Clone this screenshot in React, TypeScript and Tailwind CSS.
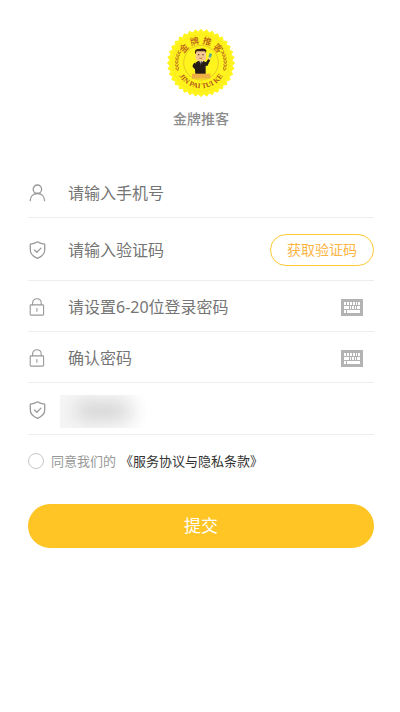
import { useState } from 'react'

const badgeEdge = Array.from({ length: 72 }, (_, i) => {
  const r = i % 2 === 0 ? 101 : 93
  const a = (i * Math.PI) / 36
  return `${(123 + r * Math.sin(a)).toFixed(1)},${(125 - r * Math.cos(a)).toFixed(1)}`
}).join(' ')

const leaves = [-20, -12, -4, 4, 12, 20]

function Badge() {
  return (
    <svg viewBox="21 23 204 204" className="size-[68px]" role="img" aria-label="金牌推客">
      <defs>
        <path id="arc-top" d="M 65 125 A 58 58 0 0 1 181 125" />
        <path id="arc-bottom" d="M 47 125 A 76 76 0 0 0 199 125" />
      </defs>
      <polygon points={badgeEdge} fill="#fff41c" stroke="#fff41c" strokeWidth="3" strokeLinejoin="round" />
      <circle cx="123" cy="125" r="85" fill="none" stroke="#f8e21c" strokeWidth="2" />
      <circle cx="123" cy="124" r="52" fill="none" stroke="#d9b32a" strokeWidth="2" />

      {/* wheat on both sides */}
      {leaves.map(a => (
        <g key={a} fill="#c98a20">
          <ellipse cx="48" cy="118" rx="2" ry="6" transform={`rotate(${a} 123 125) rotate(-24 48 118)`} />
          <ellipse cx="53" cy="118" rx="2" ry="6" transform={`rotate(${a} 123 125) rotate(32 53 118)`} />
          <ellipse cx="198" cy="118" rx="2" ry="6" transform={`rotate(${-a} 123 125) rotate(24 198 118)`} />
          <ellipse cx="193" cy="118" rx="2" ry="6" transform={`rotate(${-a} 123 125) rotate(-32 193 118)`} />
        </g>
      ))}

      <text fill="#bb5f1a" className="font-['Noto_Sans_CJK_SC',sans-serif] text-[27px] font-medium">
        <textPath href="#arc-top" startOffset="50%" textAnchor="middle">金 牌 推 客</textPath>
      </text>
      <text fill="#b4581a" className="font-['Liberation_Serif',serif] text-[22px] font-bold">
        <textPath href="#arc-bottom" startOffset="50%" textAnchor="middle">JIN PAI TUI KE</textPath>
      </text>

      {/* salesman behind the desk */}
      <path d="M106 158 L104 132 Q106 121 116 119 L130 119 L138 123 L145 112 L151 116 L142 134 L137 133 L137 158 Z" fill="#251c18" />
      <path d="M106 123 Q97 128 98 137 L108 147 L111 140 L105 134 Z" fill="#251c18" />
      <path d="M118 118 L123 132 L129 118 Z" fill="#fff" />
      <path d="M122 120 h3 l1 9 l-3 4 l-2 -4 Z" fill="#251c18" />
      <rect x="107" y="88" width="31" height="30" rx="7" fill="#f6c790" />
      <path d="M105 96 Q103 82 116 83 Q131 79 139 86 L138 96 L135 90 L110 90 L107 98 Z" fill="#3b2417" />
      <circle cx="116" cy="100" r="2" fill="#251c18" />
      <circle cx="129" cy="100" r="2" fill="#251c18" />
      <path d="M118 110 q5 3 9 0" fill="none" stroke="#9b4a20" strokeWidth="2" />
      <circle cx="148" cy="111" r="4" fill="#f6c790" />
      <rect x="147" y="96" width="8" height="12" rx="1" fill="#5aa596" transform="rotate(15 151 102)" />
      <rect x="96" y="157" width="55" height="15" fill="#eeb043" />
    </svg>
  )
}

function UserIcon() {
  return (
    <svg viewBox="0 0 18 18" className="size-[18px]" fill="none" stroke="#999" strokeWidth="1.3" strokeLinecap="round" aria-hidden="true">
      <circle cx="9.4" cy="5.2" r="4.2" />
      <path d="M2.2 16.6 C2.4 12.2 5.4 9.5 9.4 9.5 C13.4 9.5 16.4 12.2 16.6 16.6" />
    </svg>
  )
}

function ShieldIcon() {
  return (
    <svg viewBox="0 0 18 18" className="size-[18px]" fill="none" stroke="#999" strokeWidth="1.3" strokeLinecap="round" strokeLinejoin="round" aria-hidden="true">
      <path d="M9.5 0.8 C7.4 2.3 4.8 3 2.3 3.1 V9 C2.3 12.9 5.5 15.7 9.5 17.3 C13.5 15.7 16.7 12.9 16.7 9 V3.1 C14.2 3 11.6 2.3 9.5 0.8 Z" />
      <path d="M6.3 8.9 L8.8 11.3 L13 7.1" />
    </svg>
  )
}

function LockIcon() {
  return (
    <svg viewBox="0 0 18 18" className="size-[18px]" fill="none" stroke="#999" strokeWidth="1.1" strokeLinecap="round" aria-hidden="true">
      <rect x="2.2" y="6.9" width="13.4" height="10.2" rx="0.8" />
      <path d="M4.6 6.8 V5 C4.6 2.5 6.4 0.8 8.9 0.8 C11.4 0.8 13.2 2.5 13.2 5 V6.8" />
      <path d="M8.9 10.6 V13.2" />
    </svg>
  )
}

function KeyboardIcon() {
  return (
    <svg viewBox="0 0 22 17" className="h-[17px] w-[22px]" aria-hidden="true">
      <rect width="22" height="17" rx="0.6" fill="#b3b3b3" />
      <g fill="#fff">
        <path d="M3 3h2v3h-2zM6 3h2v3h-2zM9 3h2v3h-2zM12 3h2v3h-2zM15 3h1v3h-1zM17 3h2v3h-2z" />
        <path d="M3 7h5v3h-5zM9 7h1v3h-1zM11 7h2v3h-2zM14 7h1v3h-1zM16 7h3v3h-3z" />
        <path d="M3 11h2v3h-2zM6 11h13v3h-13z" />
      </g>
    </svg>
  )
}

const row = 'flex items-center border-b border-[#eeeeee] pt-0.5'
const field = 'ml-[22px] h-8 min-w-0 flex-1 bg-transparent text-base text-[#333333] placeholder-[#757575] outline-none'

function PasswordRow({ id, placeholder }: { id: string; placeholder: string }) {
  const [visible, setVisible] = useState(false)

  return (
    <div className={`${row} h-[51px]`}>
      <label htmlFor={id} aria-label={placeholder}><LockIcon /></label>
      <input id={id} type={visible ? 'text' : 'password'} placeholder={placeholder} className={field} />
      <button type="button" aria-label="显示密码" onClick={() => setVisible(!visible)} className="mr-[11px]">
        <KeyboardIcon />
      </button>
    </div>
  )
}

export default function App() {
  const [agreed, setAgreed] = useState(false)

  return (
    <main className="min-h-screen bg-white pt-[29px] pr-[26px] pb-10 pl-7 font-['Noto_Sans','Noto_Sans_CJK_SC',sans-serif]">
      <header className="flex flex-col items-center">
        <Badge />
        <h1 className="mt-3 text-sm font-medium text-[#8c8c8c]">金牌推客</h1>
      </header>

      <form className="mt-[38px]" onSubmit={e => e.preventDefault()}>
        <div className={`${row} h-[51px]`}>
          <label htmlFor="phone" aria-label="手机号"><UserIcon /></label>
          <input id="phone" type="tel" placeholder="请输入手机号" className={field} />
        </div>
        <div className={`${row} h-[63px]`}>
          <label htmlFor="code" aria-label="验证码"><ShieldIcon /></label>
          <input id="code" type="text" placeholder="请输入验证码" className={field} />
          <button type="button" className="h-8 w-[104px] shrink-0 rounded-full border border-[#fdc938] text-sm text-[#fcb544]">
            获取验证码
          </button>
        </div>
        <PasswordRow id="password" placeholder="请设置6-20位登录密码" />
        <PasswordRow id="confirm" placeholder="确认密码" />
        <div className={`${row} h-[52px]`}>
          <ShieldIcon />
          <div className="mt-1 ml-[14px] h-[33px] w-[86px] overflow-hidden bg-gradient-to-r from-[#f6f6f6] to-white">
            <div className="mx-4 mt-2 h-4 bg-[#c8c8c8] blur-[10px]" />
          </div>
        </div>

        <div className="mt-4 flex items-center text-[13px] leading-5">
          <input
            id="agree"
            type="checkbox"
            checked={agreed}
            onChange={e => setAgreed(e.target.checked)}
            className="mr-[7px] size-4 appearance-none rounded-full border border-[#c8c8c8] checked:bg-[#ffc524]"
          />
          <label htmlFor="agree" className="text-[#999999]">同意我们的</label>
          <a href="#terms" className="ml-1 text-[#333333]">《服务协议与隐私条款》</a>
        </div>

        <button type="submit" className="mt-[33px] h-11 w-full rounded-full bg-[#ffc524] text-[17px] text-white">
          提交
        </button>
      </form>
    </main>
  )
}
